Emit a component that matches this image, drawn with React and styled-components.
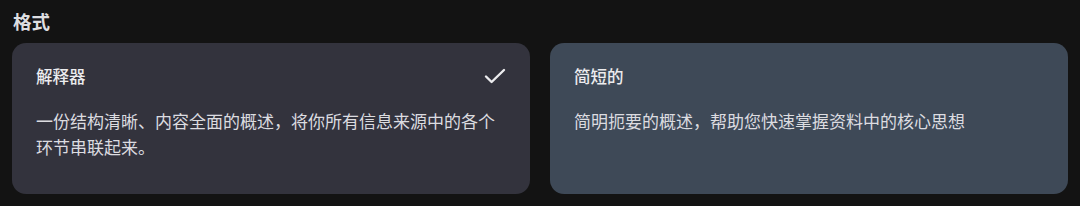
import styled, { createGlobalStyle } from 'styled-components';

const GlobalStyle = createGlobalStyle`
  html, body {
    margin: 0;
    padding: 0;
    background: #131313;
  }
  body {
    font-family: "Noto Sans CJK SC", "Noto Sans", sans-serif;
    color: #e3e3e6;
  }
`;

const Section = styled.section`
  padding: 7px 12px 0;
`;

const Heading = styled.h2`
  margin: 0 0 8px 1px;
  font-size: 18.5px;
  line-height: 28px;
  font-weight: 700;
  color: #dedee0;
`;

const Options = styled.div`
  display: grid;
  grid-template-columns: 1fr 1fr;
  gap: 20px;
`;

const Card = styled.div`
  height: 151px;
  box-sizing: border-box;
  padding: 21px 24px 0;
  border-radius: 14px;
  background: ${(p) => (p.$selected ? '#33333d' : '#3e4957')};
  cursor: pointer;
`;

const CardHead = styled.div`
  display: flex;
  align-items: center;
  justify-content: space-between;
  height: 24px;
`;

const CardTitle = styled.div`
  font-size: 16.5px;
  line-height: 24px;
  font-weight: 500;
  color: #ececee;
`;

const CardText = styled.p`
  margin: 20px 0 0;
  font-size: 17px;
  line-height: 26px;
  color: #dcdce0;
`;

const CheckMark = () => (
  <svg width="22" height="16" viewBox="0 0 22 16" fill="none">
    <path d="M2 8.5 7.6 14 20 2" stroke="#ececee" strokeWidth="2.4" strokeLinecap="round" strokeLinejoin="round" />
  </svg>
);

const formats = [
  {
    title: '解释器',
    text: '一份结构清晰、内容全面的概述，将你所有信息来源中的各个环节串联起来。',
    selected: true,
  },
  {
    title: '简短的',
    text: '简明扼要的概述，帮助您快速掌握资料中的核心思想',
    selected: false,
  },
];

export default function App() {
  return (
    <>
      <GlobalStyle />
      <Section>
        <Heading>格式</Heading>
        <Options>
          {formats.map((f) => (
            <Card key={f.title} $selected={f.selected}>
              <CardHead>
                <CardTitle>{f.title}</CardTitle>
                {f.selected && <CheckMark />}
              </CardHead>
              <CardText>{f.text}</CardText>
            </Card>
          ))}
        </Options>
      </Section>
    </>
  );
}
